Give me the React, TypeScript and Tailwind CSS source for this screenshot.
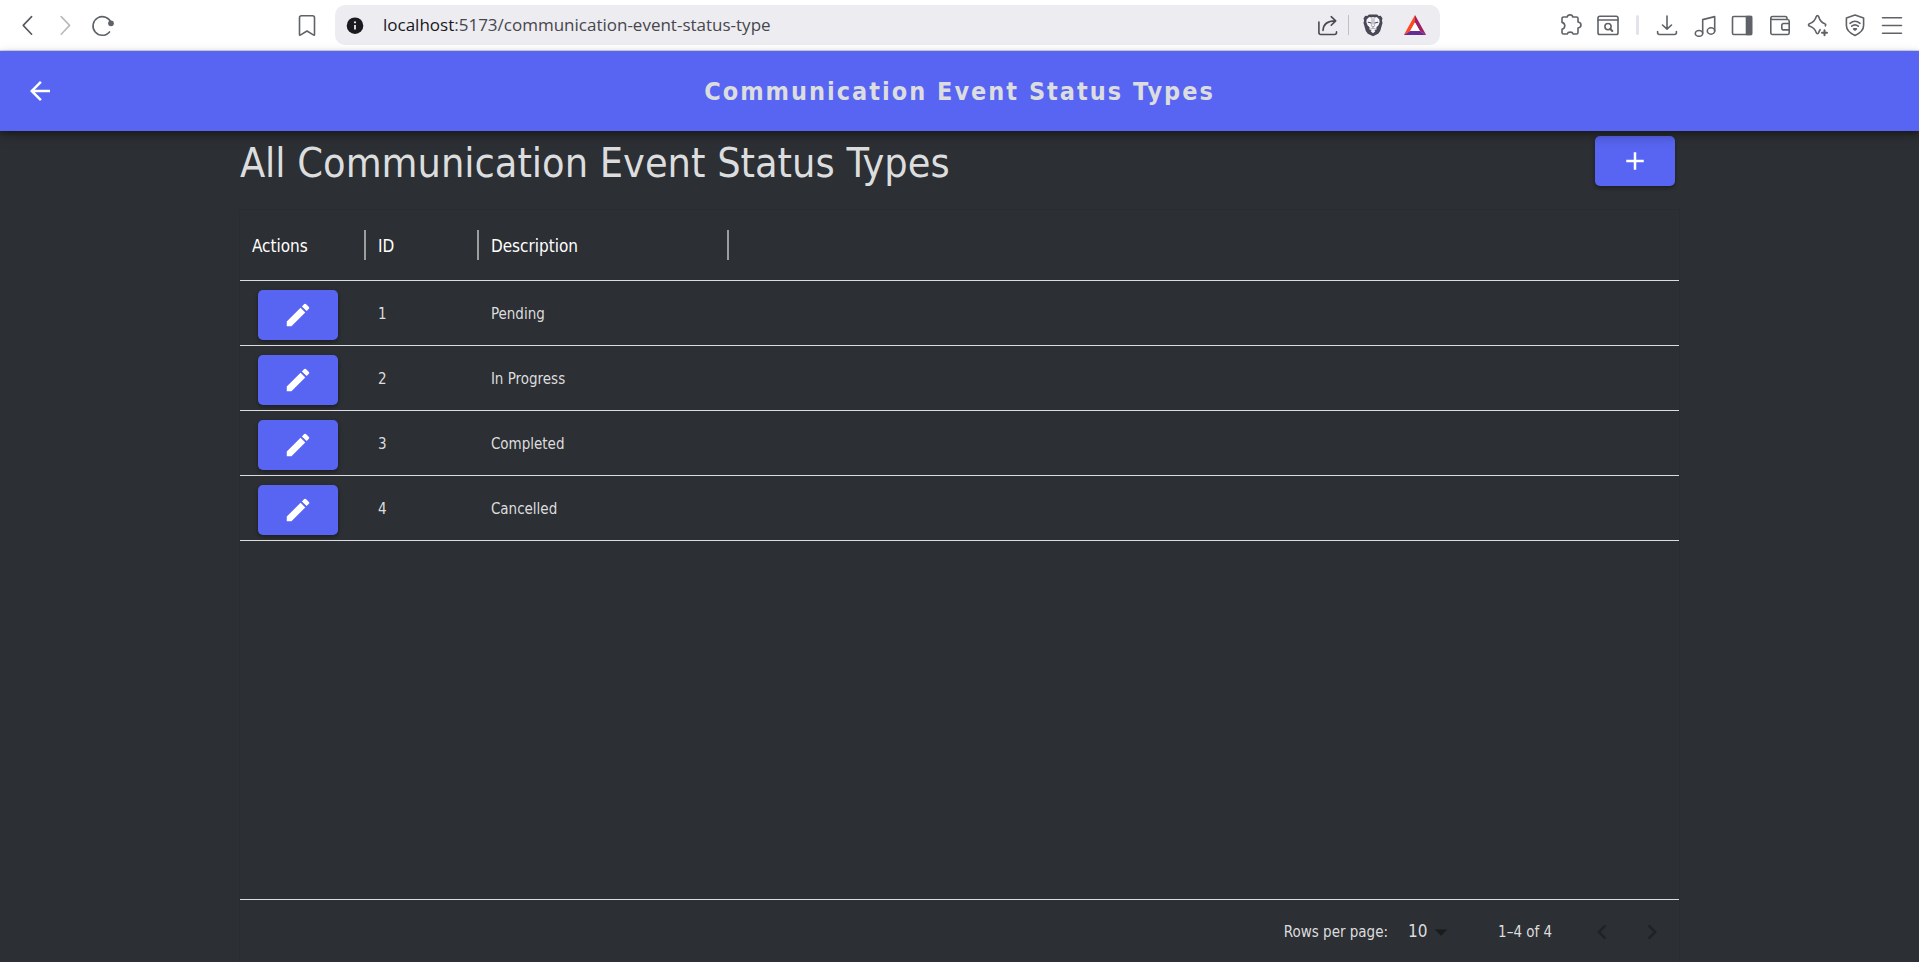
import type { ReactNode } from "react";
import { MdAdd, MdArrowBack, MdArrowDropDown, MdChevronLeft, MdChevronRight, MdEdit } from "react-icons/md";

type StatusType = { id: number; description: string };

const statusTypes: StatusType[] = [
  { id: 1, description: "Pending" },
  { id: 2, description: "In Progress" },
  { id: 3, description: "Completed" },
  { id: 4, description: "Cancelled" },
];

function Icon({ children, className = "text-[#5f6368]" }: { children: ReactNode; className?: string }) {
  return (
    <svg
      viewBox="0 0 24 24"
      className={`size-6 shrink-0 ${className}`}
      fill="none"
      stroke="currentColor"
      strokeWidth="1.6"
      strokeLinecap="round"
      strokeLinejoin="round"
      aria-hidden="true"
    >
      {children}
    </svg>
  );
}

function ToolButton({ label, children }: { label: string; children: ReactNode }) {
  return (
    <button type="button" aria-label={label} className="flex size-6 items-center justify-center">
      {children}
    </button>
  );
}

function BrowserBar() {
  return (
    <div className="flex h-[51px] shrink-0 items-center border-b border-[#dcdce2] bg-white">
      <div className="flex w-[335px] shrink-0 items-center gap-[14px] pl-[15px]">
        <ToolButton label="Back">
          <Icon className="text-[#55585d]">
            <path d="M16.6 3.6 8.2 12.4l8.4 8.8" />
          </Icon>
        </ToolButton>
        <ToolButton label="Forward">
          <Icon className="text-[#b9babd]">
            <path d="m8.2 3.6 8.4 8.8-8.4 8.8" />
          </Icon>
        </ToolButton>
        <ToolButton label="Reload">
          <Icon>
            <path d="M18.5 18.9a9.3 9.3 0 1 1 1.6-9" />
            <circle cx="20" cy="10.3" r="2.1" fill="currentColor" />
          </Icon>
        </ToolButton>
        <div className="ml-auto pr-4">
          <ToolButton label="Bookmark this page">
            <Icon>
              <path d="M6.5 2.8h11a2 2 0 0 1 2 2v16.6q0 1.3-1.2.5L12 18l-6.3 3.9q-1.2.8-1.2-.5V4.8a2 2 0 0 1 2-2Z" />
            </Icon>
          </ToolButton>
        </div>
      </div>
      <div className="flex h-10 flex-1 items-center rounded-[10px] bg-[#edecf1] pr-[13px] pl-2">
        <Icon className="text-[#1b1b1f]">
          <circle cx="12" cy="12.7" r="8.3" fill="currentColor" stroke="none" />
          <path d="M12 12v4.4" stroke="#edecf1" strokeWidth="1.8" strokeLinecap="butt" />
          <circle cx="12" cy="9.3" r="1.1" fill="#edecf1" stroke="none" />
        </Icon>
        <p className="ml-4 flex-1 font-['Open_Sans',sans-serif] text-[17px] text-[#46464c]">
          <span className="text-[#17171b]">localhost</span>:5173/communication-event-status-type
        </p>
        <ToolButton label="Share">
          <Icon className="text-[#4a4b52]">
            <path d="M2.9 9v10.5a2 2 0 0 0 2 2h13.6a2 2 0 0 0 2-2v-.6" />
            <path d="M7 17.5C7.3 11.5 11 7.9 19.3 7.9M15.200 3.700l4.500 4.200-4.500 4.400" />
          </Icon>
        </ToolButton>
        <span className="mx-2 h-5 w-px bg-[#bcc0c8]" />
        <div className="flex gap-[18px] pl-1">
          <ToolButton label="Shields">
            <Icon>
              <path
                d="M8 1.400h8l1.800 1.700 2-.3 1.700 2.600-.6 2 .6 2.500-2.300 8.200-2 2.600-5.200 2.500-5.200-2.500-2-2.600-2.300-8.200.6-2.500-.6-2 1.700-2.600 2 .3Z"
                fill="#484857"
                stroke="none"
              />
              <path
                d="m8.300 4 2 .5 1.700-.5 1.700.5 2-.5 2.500 2.200.5 2.900-1.200 3.200-2.200 2.300.3 1.700-3.600 2.500-3.600-2.500.3-1.700-2.200-2.300-1.200-3.200.5-2.900Z"
                fill="#f6f5f9"
                stroke="none"
              />
              <path d="m7.200 9.200 3 .8M16.800 9.200l-3 .8" stroke="#484857" strokeWidth="1.100" />
              <path d="m11 5.500.2 5-1 2.300 1.800 1 1.800-1-1-2.300.2-5M12 14v1.200M9.300 16.200l2.700-1.200 2.700 1.200" stroke="#8a8a97" strokeWidth="0.700" />
              <path d="m9.600 18.300 2.400-1.100 2.400 1.100-2.400 2Z" fill="#f6f5f9" stroke="none" />
            </Icon>
          </ToolButton>
          <ToolButton label="Rewards">
            <Icon>
              <g stroke="none">
                <path d="M12 2 .8 22l6.400-4L12 9.500Z" fill="#ff4724" />
                <path d="m12 2 11.200 20-6.400-4L12 9.500Z" fill="#9e1f63" />
                <path d="M.8 22h22.400l-6.400-4H7.200Z" fill="#662d91" />
                <path d="M12 9.500 16.800 18H7.200Z" fill="#fff" />
              </g>
            </Icon>
          </ToolButton>
        </div>
      </div>
      <div className="flex shrink-0 items-center pr-[15px] pl-[119px]">
        <div className="flex gap-[13px]">
          <ToolButton label="Extensions">
            <Icon>
              <path d="M4.500 4H8.200C8.500 2.600 9.600 1.900 11 1.900S13.500 2.600 13.800 4h3.700A1.500 1.500 0 0 1 19 5.500V9c1.900.3 3 1.400 3 3s-1.100 2.700-3 3v4.500a1.500 1.500 0 0 1-1.500 1.500h-3.300c-.4-1.300-1.600-1.900-3-1.900s-2.600.6-3 1.900H4.500A1.500 1.500 0 0 1 3 19.500v-3.300c1.800-.4 2.800-1.700 2.800-3.400S4.800 9.800 3 9.400V5.500A1.500 1.500 0 0 1 4.500 4Z" />
            </Icon>
          </ToolButton>
          <ToolButton label="Search tabs">
            <Icon>
              <rect x="2" y="3.300" width="20" height="18.200" rx="1.800" />
              <path d="M2 7h20" />
              <circle cx="12" cy="13.600" r="3.100" />
              <path d="m14.300 16 2 2" strokeWidth="2" />
            </Icon>
          </ToolButton>
        </div>
        <span className="mx-4 h-5 w-[3px] rounded bg-[#e4e3ea]" />
        <div className="flex w-[249px] justify-between">
          <ToolButton label="Downloads">
            <Icon>
              <path d="M12 3v12.600M7.500 12l4.500 4.200 4.500-4.200M2.600 18.500v1a2 2 0 0 0 2 2h14.800a2 2 0 0 0 2-2v-1" />
            </Icon>
          </ToolButton>
          <ToolButton label="Media controls">
            <Icon>
              <ellipse cx="6" cy="20.400" rx="3.700" ry="2.900" />
              <ellipse cx="18" cy="18" rx="3.700" ry="3.200" />
              <path d="M9.700 20V6.600L21.700 3.600V18" />
            </Icon>
          </ToolButton>
          <ToolButton label="Sidebar">
            <Icon>
              <rect x="2.500" y="3.500" width="19" height="18" rx="1.200" />
              <path d="M16.500 3.500h5v18h-5Z" fill="currentColor" />
            </Icon>
          </ToolButton>
          <ToolButton label="Wallet">
            <Icon>
              <path d="M19 6.500V5.200a1.700 1.700 0 0 0-1.700-1.700H4.500a1.700 1.700 0 0 0-1.700 1.600v14.700a1.700 1.700 0 0 0 1.700 1.700h15a1.700 1.700 0 0 0 1.700-1.700V8.200a1.700 1.700 0 0 0-1.700-1.700h-15a1.700 1.700 0 0 1-1.700-1.400" />
              <path d="M21.200 10.500h-5.400a2 2 0 0 0-2 2v2.400a2 2 0 0 0 2 2h5.400" />
            </Icon>
          </ToolButton>
          <ToolButton label="Assistant">
            <Icon>
              <path d="M20.300 12.800c.7-.6.500-1.700-.5-2-3.300-1.100-4.900-2.800-6.200-7.200-.4-1.300-1.900-1.300-2.300 0-1.300 4.300-3 6-6.900 7.200-1.200.4-1.200 1.900 0 2.300 3.900 1.300 5.600 2.900 6.900 6.700.4 1.200 1.900 1.200 2.300 0 .4-1.200.9-2.200 1.500-3.100" />
              <path d="M19.500 17.200v5M17 19.700h5" strokeWidth="2" />
            </Icon>
          </ToolButton>
          <ToolButton label="VPN">
            <Icon>
              <path d="m12 2 8.600 3v7.500c0 4.500-3.500 7.600-8.600 10-5.100-2.400-8.600-5.500-8.600-10V5Z" />
              <path d="M7 10.300c3-2.500 7-2.500 10 0M8.700 13.200c2-1.600 4.600-1.600 6.600 0" />
              <path d="M10.600 15.900h2.800L12 17Z" fill="currentColor" />
            </Icon>
          </ToolButton>
          <ToolButton label="Menu">
            <Icon>
              <path d="M2.500 4.700h19M2.500 12.500h19M2.500 20.300h19" />
            </Icon>
          </ToolButton>
        </div>
      </div>
    </div>
  );
}

function AppHeader() {
  return (
    <header className="relative z-10 grid h-20 shrink-0 grid-cols-[1fr_auto_1fr] items-center bg-[#5865f2] px-[25px] shadow-[0_2px_5px_rgba(0,0,0,0.3),0_5px_12px_rgba(0,0,0,0.25)]">
      <button type="button" aria-label="Go back" className="justify-self-start text-white">
        <MdArrowBack className="size-[30px]" />
      </button>
      <h1 className="pt-0.5 text-[25px] leading-8 font-bold tracking-[2px] text-[#dcddde]">
        Communication Event Status Types
      </h1>
    </header>
  );
}

const buttonStyle =
  "flex h-[50px] w-20 items-center justify-center rounded-[5px] bg-[#5865f2] text-white shadow-[0_2px_4px_rgba(0,0,0,0.35)]";

function StatusTable() {
  return (
    <section className="flex flex-1 flex-col shadow-[0_0_0_1px_#292c30]">
      <table className="w-full table-fixed border-collapse text-left">
        <colgroup>
          <col className="w-[126px]" />
          <col className="w-[113px]" />
          <col className="w-[250px]" />
          <col />
        </colgroup>
        <thead>
          <tr className="h-[70px] border-b border-[#dcddde] text-[17px] leading-6 text-white">
            {["Actions", "ID", "Description"].map((name) => (
              <th key={name} scope="col" className="p-0 font-normal">
                <div className="flex h-[30px] items-center border-r-2 border-[#9c9d9f] pt-0.5 pl-3">{name}</div>
              </th>
            ))}
            <td />
          </tr>
        </thead>
        <tbody>
          {statusTypes.map((row) => (
            <tr key={row.id} className="h-[65px] border-b border-[#dcddde] text-[15px] leading-6 text-[#dcddde]">
              <td className="pt-1 pl-[18px]">
                <button type="button" aria-label={`Edit ${row.description}`} className={buttonStyle}>
                  <MdEdit className="size-[30px]" />
                </button>
              </td>
              <td className="pt-0.5 pl-3">{row.id}</td>
              <td className="pt-0.5 pl-3">{row.description}</td>
              <td />
            </tr>
          ))}
        </tbody>
      </table>
      <div className="flex-1" />
      <footer className="flex h-[63px] items-center justify-end border-t border-[#dcddde] pt-0.5 pr-0.5 text-[15px] text-[#dcddde]">
        <label htmlFor="page-size">Rows per page:</label>
        <div className="relative ml-5 flex items-center">
          <select id="page-size" defaultValue="10" className="w-[50px] appearance-none bg-transparent text-[17px] outline-none">
            <option value="10">10</option>
            <option value="25">25</option>
            <option value="50">50</option>
          </select>
          <MdArrowDropDown className="pointer-events-none absolute right-0.5 size-[30px] text-[#191b1d]" />
        </div>
        <span className="ml-10">1–4 of 4</span>
        <div className="ml-[25px] flex text-[#202225]">
          <button type="button" disabled aria-label="Previous page" className="flex size-[50px] items-center justify-center">
            <MdChevronLeft className="size-[30px]" />
          </button>
          <button type="button" disabled aria-label="Next page" className="flex size-[50px] items-center justify-center">
            <MdChevronRight className="size-[30px]" />
          </button>
        </div>
      </footer>
    </section>
  );
}

export default function App() {
  return (
    <div className="flex min-h-screen flex-col bg-[#2c2f33] font-['DejaVu_Sans_Condensed','DejaVu_Sans',sans-serif]">
      <BrowserBar />
      <AppHeader />
      <main className="mx-auto flex w-3/4 flex-1 flex-col">
        <div className="flex items-start justify-between pt-[5px] pr-1 pb-5">
          <h2 className="text-[41px] leading-[54px] text-[#dcddde]">All Communication Event Status Types</h2>
          <button type="button" aria-label="Add status type" className={buttonStyle}>
            <MdAdd className="size-[30px]" />
          </button>
        </div>
        <StatusTable />
      </main>
    </div>
  );
}
